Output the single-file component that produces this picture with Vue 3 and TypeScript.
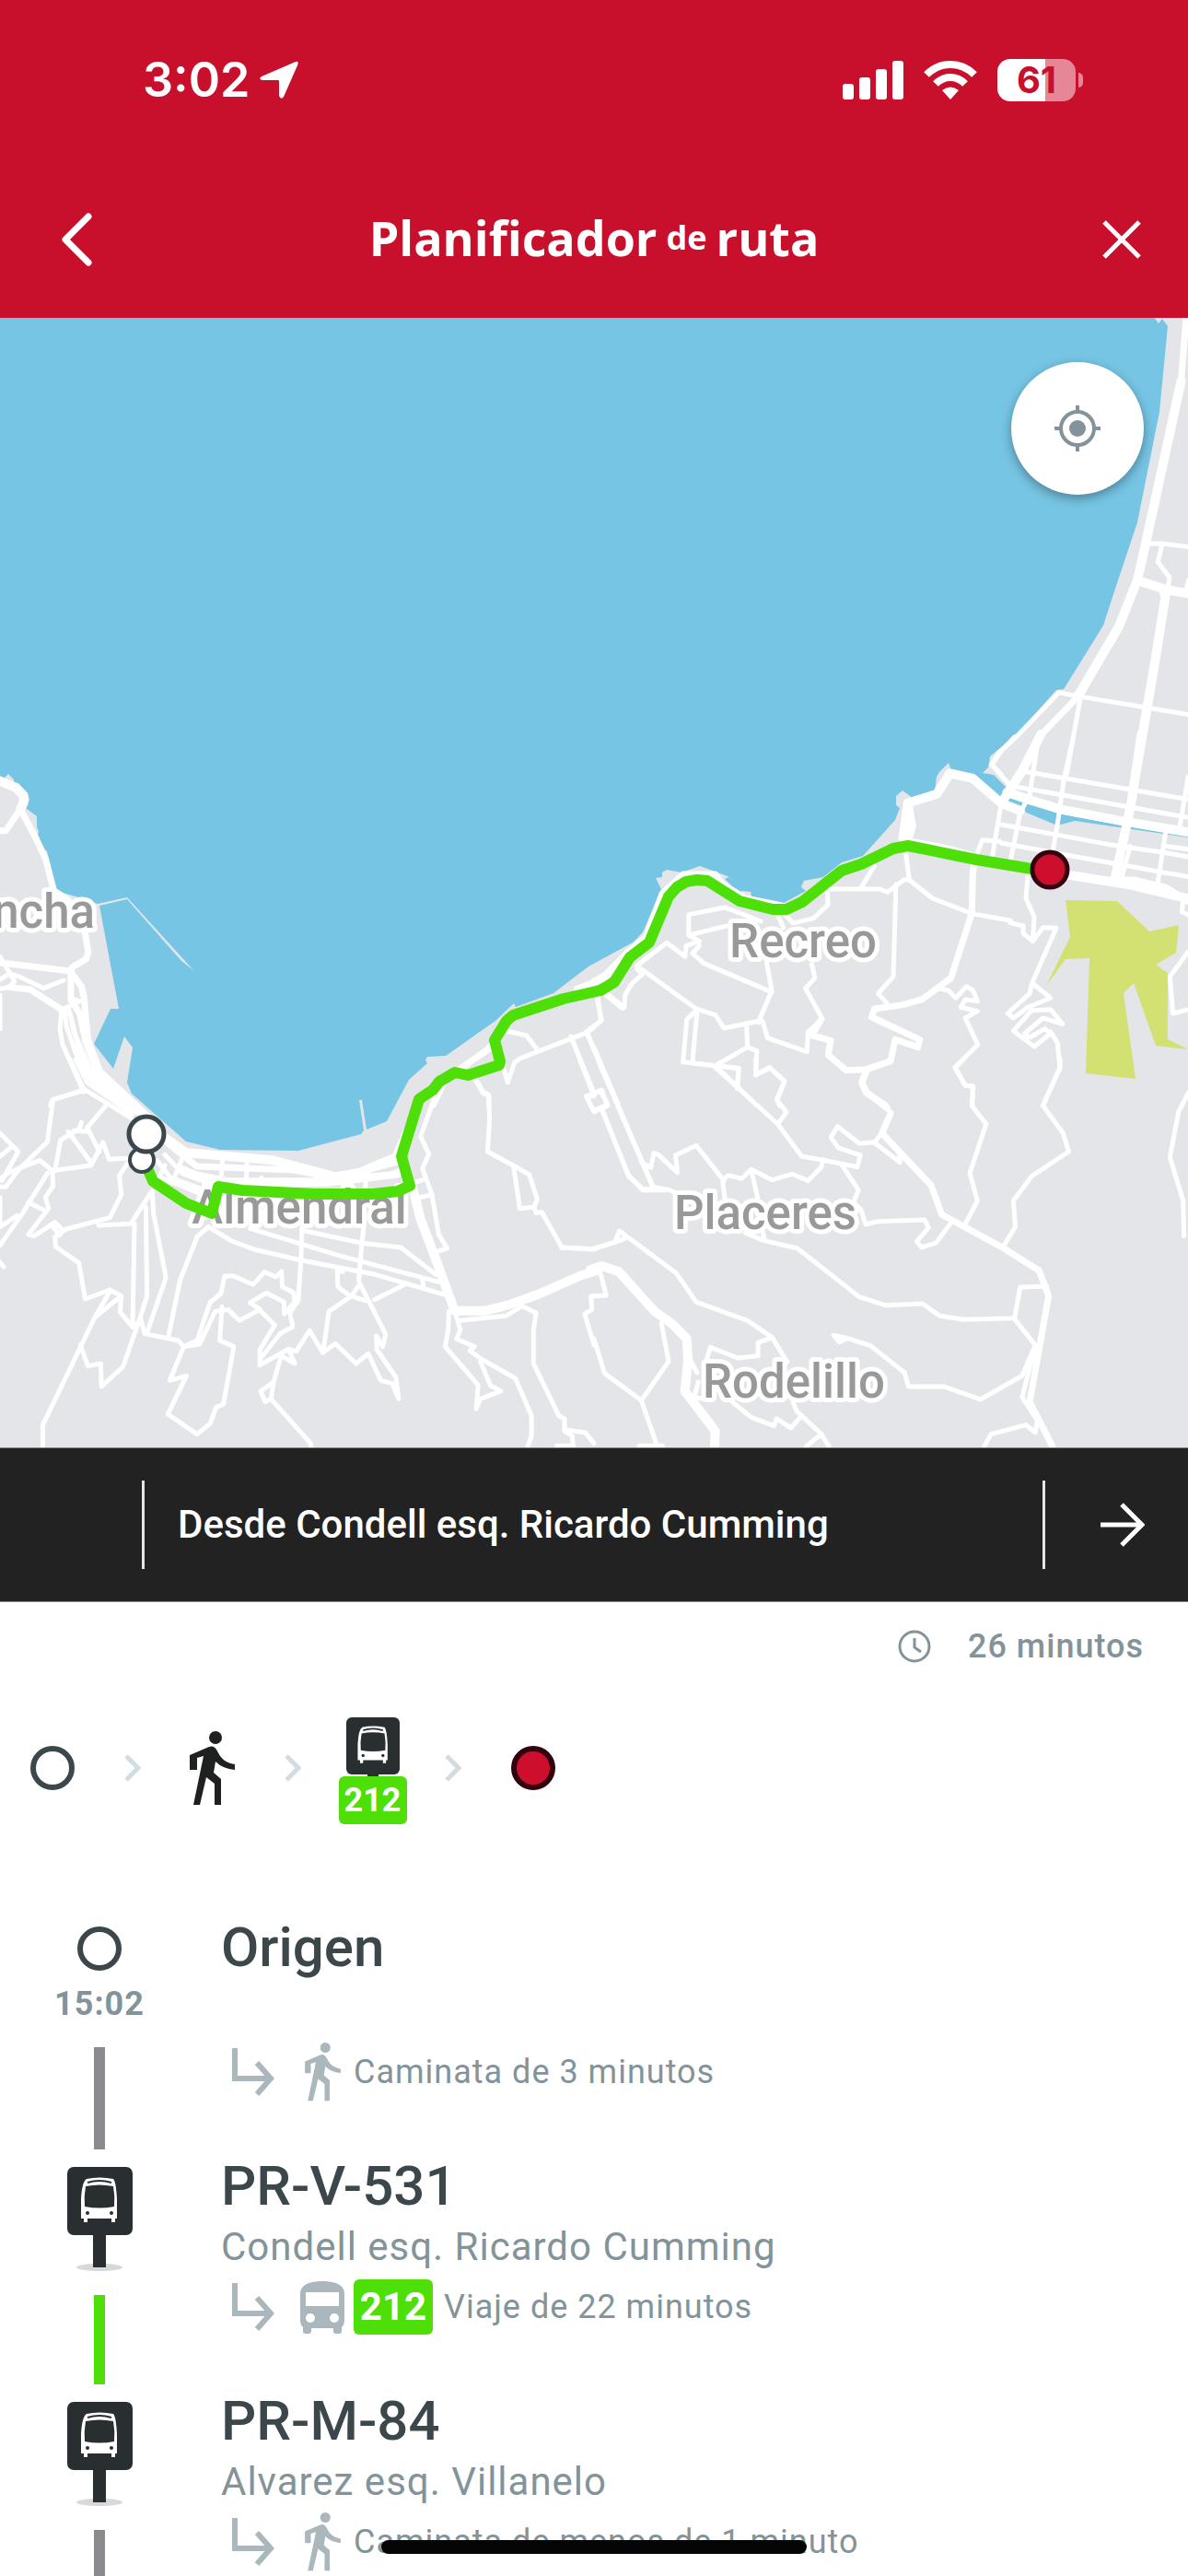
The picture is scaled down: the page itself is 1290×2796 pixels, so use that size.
<script setup lang="ts">
interface Tile {
  transform: string
  minor: string[]
  major: string[]
  wide: string[]
}

interface Leg {
  kind: 'walk' | 'bus'
  label: string
  line?: string
}

interface Step {
  title: string
  place?: string
  time?: string
  leg: Leg
}

const tiles: Tile[] = [
  {
    transform: 'translate(0 800) scale(0.4114 0.3333)',
    minor: [
      '0,715 38,795 25,815 0,820',
      '0,790 25,770 55,782 115,818 168,792',
      '163,888 158,950 165,1000 215,1140 222,1155',
      '163,888 210,860 185,850',
      '170,885 175,940 200,1030 230,1110',
      '180,880 195,960 245,1100 350,1200',
      '185,900 205,1000 230,1100 330,1200',
      '222,1150 138,1182 133,1200',
      '0,840 0,950',
      '1520,820 1568,800',
      '1340,958 1390,972 1418,1018',
      '1330,1080 1340,1125 1358,1060 1375,1045 1550,962 1568,945',
      '1550,962 1568,1020',
      '1508,980 1568,1160',
      '1290,1020 1180,1110 1145,1200',
      '1250,1105 1275,1160 1290,1165 1290,1200',
    ],
    major: [
      '54,235 15,305 0,305',
      '54,235 95,330 120,395 142,500 180,530',
      '225,640 233,700 228,722 190,750 187,762 0,735',
      '187,765 215,812 222,850 232,985',
      '187,765 187,855 210,900 225,985',
      '25,815 80,822 163,888',
      '1310,985 1285,1020 1215,1080',
    ],
    wide: ['-10,140 0,143 40,163 62,190 62,215 54,235', '228,985 260,1090 390,1240'],
  },
  {
    transform: 'translate(0 1150) scale(0.4114 0.3333)',
    minor: [
      '185,0 220,95 345,190',
      '200,0 230,75 350,178',
      '215,0 240,65 380,190',
      '220,100 140,130 125,268 50,358 15,415 0,415',
      '0,240 48,300 5,395',
      '30,285 0,315',
      '0,390 20,370 105,328 138,362 240,345 272,270 288,325 335,322',
      '280,150 230,222 262,300',
      '215,205 210,225 160,262 145,362',
      '180,235 240,335',
      '195,232 232,235',
      '138,362 140,412 120,448 128,485 75,570 90,575 145,530 165,555 157,572 138,542',
      '125,370 60,500 0,605',
      '75,465 118,492',
      '0,545 45,508',
      '0,450 0,540',
      '0,660 10,675',
      '335,340 315,378 320,440 290,515 175,552 145,578 147,610 208,662 225,780 290,750 320,770 317,822 350,872 372,850',
      '260,540 345,535 400,430',
      '355,535 350,870',
      '385,480 388,770 370,840 325,1000 268,1065 266,990 232,998 212,930',
      '402,430 405,500 438,710 388,890',
      '290,755 250,840 113,1190 113,1260',
      '315,775 250,840',
      '370,840 382,893 470,915 485,935 527,927',
      '550,545 520,578 475,720 445,900',
      '485,935 448,1045 492,1030 443,1155 520,1220 555,1185 570,1133 590,1122 617,935 580,915 586,805',
      '485,935 520,915 555,790 583,762 593,705 617,705 668,733 698,692 728,708 743,690 745,740 775,760 778,790 750,828 750,790 703,760 660,792 685,812',
      '527,927 568,820 603,815 632,850 685,815 725,865 686,945 686,995 762,943 778,990 742,965',
      '797,550 795,640 787,785 765,825 773,870 740,892 690,970',
      '742,965 722,1050 688,1080 700,1115 715,1105 820,1250 820,1260',
      '722,1050 715,1105',
      '765,945 782,950 817,882 852,955 885,925 940,990 972,958 1005,1045 1035,1055 1052,1105 1045,1035 995,945 993,900 1010,935 1018,895 950,730 928,770 868,820 853,950',
      '905,690 890,690 892,740 925,770 965,785',
      '988,782 1065,735',
      '960,545 955,600 947,720',
      '550,545 610,590 670,618 800,655 990,700 1170,765',
      '660,550 900,640 1160,725',
      '805,558 955,598 1058,612 1150,700',
      '1115,715 1118,745',
      '1215,850 1335,835 1378,803 1415,825 1408,880 1408,990 1475,1160 1490,1170 1490,1210 1510,1225 1513,1260',
      '1200,820 1215,880 1205,910 1252,935 1240,948 1270,975 1360,1038 1403,1160 1403,1225 1393,1260',
      '1185,820 1183,880 1175,935 1262,1060 1257,1137 1268,1105 1322,1080 1295,1062 1268,985',
      '1490,1205 1545,1215 1568,1250',
      '1470,1258 1510,1258',
      '1568,770 1560,770 1562,815 1543,828 1568,930',
      '1160,80 1110,250 1132,308 1115,355 1140,440 1158,570 1180,615 1155,625',
      '1090,455 1140,440',
      '1085,405 1120,390',
      '1255,60 1275,105 1290,115 1292,200 1287,300 1355,345 1397,375 1418,455 1410,480 1372,485 1355,345',
      '1410,480 1415,500 1430,497 1483,612 1568,617',
      '1530,0 1565,110',
      '1568,118 1548,122 1568,170',
      '435,310 480,370 545,400',
      '415,330 450,385 540,425',
      '425,385 535,440',
      '480,325 455,400',
      '587,330 583,395',
      '652,340 650,395',
      '435,345 420,385',
      '965,395 965,430',
      '690,385 690,420',
      '1107,130 1045,300',
    ],
    major: [
      '440,270 520,348 775,360 885,385 1045,335',
      '470,350 520,375 600,395 860,395 1030,375 1055,365',
      '540,400 700,408 870,402 1050,375',
    ],
    wide: [
      '430,250 490,303 720,328 885,382 950,368 1050,316',
      '1090,420 1110,520 1150,650 1200,818 1280,818 1340,800 1420,765 1530,705 1580,685',
    ],
  },
  {
    transform: 'translate(645 800) scale(0.4114 0.3333)',
    minor: [
      '1110,0 1075,45 1050,90 1100,160',
      '1170,20 1150,190 1125,245 1100,400',
      '1265,0 1240,140 1225,270 1212,365',
      '1568,130 1545,300',
      '1135,112 1420,172 1568,203',
      '1105,160 1400,225 1568,262',
      '1075,285 1360,350 1500,375 1568,390',
      '1075,345 1220,378 1400,418 1568,455',
      '1508,315 1488,475',
      '1505,355 1568,365',
      '1075,215 1052,385',
      '1070,340 1025,335 1005,400',
      '1415,355 1395,450',
      '1470,495 1490,475',
      '1555,530 1552,570 1568,578',
      '822,370 832,465 818,465 775,505 755,495 615,495 618,545 580,590 530,605',
      '740,420 705,490',
      '832,465 893,525 997,575 1100,598',
      '797,480 790,780 750,835 772,865',
      '1145,450 1140,525 1162,585 1158,665 1133,640 1133,615 1098,605',
      '1158,665 1185,620 1220,622 1155,805 1150,835 1092,900 1107,915 1145,880 1205,850 1160,805',
      '1145,975 1137,965 1185,915 1237,935 1205,887 1155,890 1107,957 1162,1008 1205,965 1190,950 1150,978',
      '1205,960 1223,995 1230,1075 1185,1200',
      '905,818 935,825 955,850 983,812 1000,825 1012,860 980,855 968,880 1012,893 980,915 1013,1002 953,1075 980,1135 1000,1137 998,1200',
      '1568,700 1520,780 1528,900 1568,888',
      '440,600 400,580 345,555 250,578 250,645 350,615',
      '250,645 278,665 243,680 240,715 192,670 113,745 270,885 320,905 343,948 435,925 468,830 290,737 260,705 278,680',
      '113,755 128,772 100,803 82,840 80,880',
      '10,845 18,925 0,943',
      '455,730 470,830',
      '575,740 583,785 558,818 603,918',
      '485,580 500,620',
      '505,580 525,605',
      '435,930 445,925 458,980 562,1025 565,960 597,925',
      '270,890 245,920 235,1058 320,1070 405,1010 403,945',
      '272,895 260,1055',
      '405,1010 430,1022 427,1100 465,1078 503,1120 483,1180 490,1200',
      '320,1070 382,1080 378,1140',
      '320,1070 430,1200',
      '0,1010 65,1200',
      '0,1160 18,1155 35,1195',
    ],
    major: [
      '1005,400 1000,440 997,575 942,785 865,855 815,872 740,885 733,912 860,985 855,1010 795,985 783,1055 720,1082 665,1085 618,1035 625,988 575,972 597,925',
      '720,1085 707,1125 718,1158 770,1200',
      '825,215 812,330',
      '0,795 30,775 90,700 138,650 180,510 235,447 320,447 340,480 400,525 500,550',
      '1010,390 930,362 840,340',
      '25,830 75,880',
      '1380,465 1425,465 1510,490 1568,535',
    ],
    wide: [
      '1180,-10 1130,110 1075,215',
      '1445,-10 1420,200 1400,320 1375,460',
      '1090,180 1150,205 1230,235 1400,275 1580,312',
      '828,330 838,290 828,215 905,185 940,118 1000,135 1075,215 1125,240',
      '1205,440 1410,480 1580,530',
    ],
  },
  {
    transform: 'translate(645 1150) scale(0.4114 0.3333)',
    minor: [
      '10,0 155,415 200,425 215,435',
      '20,160 90,375 128,425 190,425',
      '0,110 20,100 35,148 0,165',
      '320,25 485,210 548,315 605,328 695,350 703,312 645,288 625,253 643,218 700,273 738,270',
      '235,8 320,20 382,28 378,95',
      '427,0 427,50 463,25 503,72 483,132 508,172 485,210',
      '760,240 740,270 808,335 805,310',
      '975,0 953,28 980,85 1000,87 998,152 1035,210 992,370 1012,460 978,540',
      '1230,0 1230,28 1185,150 1238,240 1253,300 1155,380 1107,460 1112,545 1080,610',
      '1568,110 1543,170 1520,318 1555,460 1557,575',
      '125,335 150,352 158,305 170,310 220,368 215,312 270,280 343,395 340,400 345,450',
      '343,388 355,377 390,388 415,358 470,392 523,373 565,395 600,350 605,325',
      '415,360 432,450',
      '655,345 698,425 685,465 705,490 717,537 750,527 873,522 883,548 852,592 865,612 903,597 940,535',
      '400,565 450,590 537,615 700,773 768,800 867,795 913,835 975,847 1110,842 1125,742 1195,738',
      '445,560 450,585',
      '1110,845 1165,930 1130,1100 1170,1175 1165,1215 1140,1190 1048,1220 1030,1260',
      '1165,930 1130,1030 1020,1107 923,1065 830,1065 820,1020 730,932 670,908 648,920 632,898 670,908',
      '0,615 55,595 67,558 218,697 270,790 405,850 470,905 510,985',
      '55,595 85,580',
      '470,905 433,922 433,965 380,972 307,937 298,975',
      '18,700 32,768 0,770',
      '0,910 28,1022 125,1110 197,983 178,860',
      '125,1110 167,1260',
      '120,1258 180,1258',
      '255,980 272,1020',
      '265,1100 275,1050',
      '265,1100 290,1105',
      '365,1115 415,1165 475,1193 482,1170 520,1200 548,1160',
      '525,1115 535,1145 600,1220 620,1260',
      '600,1220 560,1260',
    ],
    major: [
      '720,32 707,73 718,105 775,160',
      '783,175 760,240 890,410 918,505 1075,610 1175,688 1200,770 1150,1115 1210,1260',
    ],
    wide: ['-10,685 20,672 65,690 160,820 210,865 245,910 248,980 240,1080 320,1210 318,1270'],
  },
  {
    transform: 'translate(900 340) scale(0.3333 0.3333)',
    minor: [
      '1040,750 1085,750 1180,762',
      '1085,755 1072,810 1110,860 1105,890',
      '1080,900 1095,940',
      '750,1235 810,1247 1180,1308',
      '750,1235 610,1380 555,1430 530,1470 560,1500',
      '820,1250 775,1500',
      '680,1400 665,1500',
      '1172,870 1163,910',
    ],
    major: ['1165,0 1148,220 1030,740', '810,1250 690,1375 620,1500'],
    wide: ['1148,220 1030,760 1005,870 945,1020 810,1250', '1005,870 1100,900 1180,914', '1100,900 1060,1150 1000,1500'],
  },
  {
    transform: 'translate(380 900) scale(0.3333 0.3333)',
    minor: [
      '720,675 795,860',
      '770,870 820,850 840,900 795,920 770,870',
      '820,910 908,1130 955,1172 990,1172',
      '770,660 990,1170',
      '770,660 820,622 805,550',
      '690,1362 795,1368 890,1335',
    ],
    major: ['740,520 830,485 905,400'],
    wide: [],
  },
]

const coast =
  '0,842 3,846 9,840 15,846 15,850 20,850 30,861 32,868 28,877 40,886 40,898 42,902 41,907 46,920 51,924 61,967 82,973 106,981 138,974 210,1053 197,1043 138,976 108,983 129,1095 120,1095 102,1133 123,1160 135,1125 144,1137 138,1175 143,1187 202,1239 239,1248 324,1249 392,1231 395,1227 390,1194 393,1194 398,1226 420,1217 444,1172 464,1154 462,1151 464,1147 484,1146 538,1108 558,1089 560,1093 601,1078 639,1049 687,1023 698,1012 718,965 712,953 719,952 719,947 724,944 740,947 760,940 790,951 801,958 791,952 787,954 805,972 805,967 815,968 816,973 851,980 875,967 870,963 873,956 894,952 914,936 937,929 972,890 977,877 973,874 973,864 980,858 991,866 1015,859 1017,843 1020,838 1030,828 1033,837 1061,842 1087,867 1093,855 1079,841 1067,839 1073,833 1075,821 1104,797 1147,749 1155,748 1198,679 1208,648 1235,567 1259,447 1268,354 1262,346 1258,351 1253,344 1290,344 1290,1572 0,1572'

const river =
  '1056,842 1068,843 1079,841 1095,861 1108,865 1112,870 1149,883 1198,892 1290,906 1290,909 1167,891 1148,896 1110,880 1091,872'

const park =
  '1157,977 1213,978 1248,1011 1280,1004 1277,1034 1255,1047 1268,1056 1268,1128 1290,1139 1255,1135 1231,1067 1220,1078 1233,1171 1179,1165 1183,1040 1157,1041 1136,1070 1162,1017'

const route =
  '160,1268 166,1282 202,1306 230,1317 237,1288 263,1292 341,1296 405,1296 432,1293 445,1287 436,1255 455,1193 470,1183 477,1174 494,1164 508,1167 542,1156 543,1152 537,1129 550,1108 557,1102 612,1084 652,1075 667,1066 684,1039 705,1023 726,973 735,963 745,957 757,955 768,956 803,978 839,987 854,987 871,979 914,945 935,938 970,921 986,918 1060,933 1120,943'

const labels = [
  { text: 'ncha', x: 103, y: 1007, anchor: 'end' },
  { text: 'Recreo', x: 872, y: 1039, anchor: 'middle' },
  { text: 'Almendral', x: 325, y: 1328, anchor: 'middle' },
  { text: 'Placeres', x: 831, y: 1334, anchor: 'middle' },
  { text: 'Rodelillo', x: 862, y: 1517, anchor: 'middle' },
] as const

const steps: Step[] = [
  { title: 'Origen', time: '15:02', leg: { kind: 'walk', label: 'Caminata de 3 minutos' } },
  {
    title: 'PR-V-531',
    place: 'Condell esq. Ricardo Cumming',
    leg: { kind: 'bus', line: '212', label: 'Viaje de 22 minutos' },
  },
  {
    title: 'PR-M-84',
    place: 'Alvarez esq. Villanelo',
    leg: { kind: 'walk', label: 'Caminata de menos de 1 minuto' },
  },
]

const walker =
  'M0 26L21 17Q26 15 29 20L33 27Q39 35 49 36V42Q36 41 28 33L26 45L34 52V80H27V57L18 50L11 80H4L15 27L8 29V42H0Z'
const busFace =
  'M21 13Q35 10 50 13Q53 16 54 35V56H52V60H48V56H22V60H18V56H15V35Q16 16 21 13Z'
</script>

<template>
  <div class="screen">
    <header class="top">
      <div class="status">
        <div class="clock">
          <span>3:02</span>
          <svg width="42" height="42" viewBox="0 0 42 42" aria-hidden="true">
            <path d="M39 1Q43 0 41 5L26 39Q23 43 21 38V22Q21 21 20 21H3Q-2 20 2 17Z" fill="#fff" />
          </svg>
        </div>
        <div class="signals">
          <svg width="66" height="42" viewBox="0 0 66 42" fill="#fff" aria-hidden="true">
            <rect x="0" y="25" width="12" height="17" rx="3" />
            <rect x="18" y="18" width="12" height="24" rx="3" />
            <rect x="36" y="9" width="12" height="33" rx="3" />
            <rect x="54" y="0" width="12" height="42" rx="3" />
          </svg>
          <svg width="58" height="42" viewBox="0 0 58 42" aria-hidden="true">
            <g fill="none" stroke="#fff" stroke-width="8">
              <path d="M3 15Q14 4 29 4T55 15" />
              <path d="M13 25Q20 18 29 18T45 25" />
            </g>
            <path d="M20 32Q29 25 38 32L29 42Z" fill="#fff" />
          </svg>
          <div class="battery">
            <div class="cell"><span>61</span></div>
            <i class="nub"></i>
          </div>
        </div>
      </div>
      <nav class="bar">
        <button class="nav-btn back" type="button" aria-label="Volver">
          <svg width="34" height="58" viewBox="0 0 34 58" aria-hidden="true">
            <path d="M30 4L5 29L30 54" fill="none" stroke="#fff" stroke-width="7" stroke-linecap="round" stroke-linejoin="round" />
          </svg>
        </button>
        <h1><span>Planificador</span> <small>de</small> <span>ruta</span></h1>
        <button class="nav-btn" type="button" aria-label="Cerrar">
          <svg width="42" height="42" viewBox="0 0 42 42" aria-hidden="true">
            <path d="M2 2L40 40M40 2L2 40" fill="none" stroke="#fff" stroke-width="5" />
          </svg>
        </button>
      </nav>
    </header>

    <section class="map">
      <svg class="map-art" viewBox="0 345 1290 1226" role="img" aria-label="Mapa de la ruta">
        <rect x="0" y="344" width="1290" height="1228" fill="#76c5e4" />
        <polygon :points="coast" fill="#e4e5e9" />
        <polygon :points="river" fill="#76c5e4" />
        <polygon :points="park" fill="#d3e173" />
        <g v-for="tile in tiles" :key="tile.transform" :transform="tile.transform" class="roads">
          <polyline v-for="p in tile.minor" :key="p" :points="p" class="minor" />
          <polyline v-for="p in tile.major" :key="p" :points="p" class="major" />
          <polyline v-for="p in tile.wide" :key="p" :points="p" class="wide" />
        </g>
        <text
          v-for="l in labels"
          :key="l.text"
          class="place-label"
          :x="l.x"
          :y="l.y"
          :text-anchor="l.anchor"
        >{{ l.text }}</text>
        <polyline :points="route" class="route" />
        <circle cx="154" cy="1259" r="13" fill="#fff" stroke="#3c474c" stroke-width="4" />
        <circle cx="159" cy="1231" r="19" fill="#fff" stroke="#3c474c" stroke-width="5" />
        <circle cx="1140" cy="944" r="19" fill="#cd0f2d" stroke="#32000e" stroke-width="5" />
      </svg>
      <button class="locate" type="button" aria-label="Mi ubicación">
        <svg width="50" height="50" viewBox="0 0 50 50" aria-hidden="true">
          <circle cx="25" cy="25" r="18" fill="none" stroke="#829399" stroke-width="4" />
          <circle cx="25" cy="25" r="9" fill="#829399" />
          <path d="M25 0V6M25 44V50M0 25H6M44 25H50" stroke="#829399" stroke-width="4" />
        </svg>
      </button>
    </section>

    <section class="direction">
      <div class="prev"></div>
      <p>Desde Condell esq. Ricardo Cumming</p>
      <button class="next" type="button" aria-label="Siguiente">
        <svg width="48" height="48" viewBox="0 0 48 48" aria-hidden="true">
          <path d="M0 24H44M23 2L45 24L23 46" fill="none" stroke="#fff" stroke-width="5" />
        </svg>
      </button>
    </section>

    <main>
      <p class="duration">
        <svg width="36" height="36" viewBox="0 0 36 36" fill="none" stroke="#829399" stroke-width="3" aria-hidden="true">
          <circle cx="18" cy="18" r="16" />
          <path d="M18 9V19L25 24" />
        </svg>
        <span>26 minutos</span>
      </p>

      <div class="summary">
        <span class="cell-item"><i class="ring"></i></span>
        <span class="cell-item">
          <svg class="chevron" width="18" height="30" viewBox="0 0 18 30"><path d="M2 2L15 15L2 28" /></svg>
        </span>
        <span class="cell-item">
          <svg width="49" height="81" viewBox="0 0 49 81" fill="#1f2121"><circle cx="28" cy="7" r="7" /><path :d="walker" /></svg>
        </span>
        <span class="cell-item">
          <svg class="chevron" width="18" height="30" viewBox="0 0 18 30"><path d="M2 2L15 15L2 28" /></svg>
        </span>
        <span class="cell-item stop">
          <svg width="60" height="64" viewBox="0 0 60 64" aria-hidden="true">
            <rect x="1" y="0" width="58" height="62" rx="6" fill="#292e31" />
            <rect x="24" y="60" width="12" height="4" fill="#292e31" />
            <g transform="translate(1 0) scale(0.83 0.83)">
              <path :d="busFace" fill="#fff" />
              <path d="M20 21Q35 18 50 21Q52 32 51 43Q35 46 19 43Q18 32 20 21Z" fill="#292e31" />
              <path d="M22 17Q35 13 48 17" fill="none" stroke="#292e31" stroke-width="2" />
              <circle cx="22" cy="50" r="2" fill="#292e31" />
              <circle cx="48" cy="50" r="2" fill="#292e31" />
            </g>
          </svg>
          <b class="badge small">212</b>
        </span>
        <span class="cell-item">
          <svg class="chevron" width="18" height="30" viewBox="0 0 18 30"><path d="M2 2L15 15L2 28" /></svg>
        </span>
        <span class="cell-item"><i class="ring end"></i></span>
      </div>

      <ol class="steps">
        <li v-for="step in steps" :key="step.title" class="step">
          <div class="rail">
            <template v-if="step.time">
              <i class="ring"></i>
              <time>{{ step.time }}</time>
            </template>
            <svg v-else class="sign" width="71" height="113" viewBox="0 0 71 113" aria-hidden="true">
              <ellipse cx="35" cy="109" rx="25" ry="4" fill="#d9d8d9" />
              <rect width="71" height="74" rx="7" fill="#292e31" />
              <rect x="28" y="72" width="14" height="37" fill="#292e31" />
              <path :d="busFace" fill="#fff" />
              <path d="M20 21Q35 18 50 21Q52 32 51 43Q35 46 19 43Q18 32 20 21Z" fill="#292e31" />
              <path d="M22 17Q35 13 48 17" fill="none" stroke="#292e31" stroke-width="2" />
              <circle cx="22" cy="50" r="2" fill="#292e31" />
              <circle cx="48" cy="50" r="2" fill="#292e31" />
            </svg>
            <span class="line" :class="step.leg.kind"></span>
          </div>
          <div class="body">
            <h2>{{ step.title }}</h2>
            <p v-if="step.place" class="place">{{ step.place }}</p>
            <div v-else class="spacer"></div>
            <div class="leg">
              <svg class="turn" width="46" height="52" viewBox="0 0 46 52" aria-hidden="true">
                <path d="M3 0V33H42M27 16L42 33L27 50" fill="none" stroke="#aab7bd" stroke-width="6" />
              </svg>
              <span class="mode">
                <svg v-if="step.leg.kind === 'walk'" width="39" height="64" viewBox="0 0 49 81" fill="#aab7bd" aria-hidden="true">
                  <circle cx="28" cy="7" r="7" />
                  <path :d="walker" />
                </svg>
                <svg v-else width="48" height="57" viewBox="0 0 48 57" aria-hidden="true">
                  <path d="M0 14Q0 0 24 0T48 14V42Q48 47 45 50V54Q45 57 42 57H39Q36 57 36 54V51H12V54Q12 57 9 57H6Q3 57 3 54V50Q0 47 0 42Z" fill="#aab7bd" />
                  <rect x="6" y="12" width="36" height="15" fill="#fff" />
                  <circle cx="11" cy="40" r="5" fill="#fff" />
                  <circle cx="37" cy="40" r="5" fill="#fff" />
                </svg>
              </span>
              <b v-if="step.leg.line" class="badge">{{ step.leg.line }}</b>
              <span>{{ step.leg.label }}</span>
            </div>
          </div>
        </li>
      </ol>
    </main>
    <div class="home"></div>
  </div>
</template>

<style>
body {
  margin: 0;
  background: #fff;
}
</style>

<style scoped>
.screen {
  position: relative;
  height: 100vh;
  overflow: hidden;
  display: flex;
  flex-direction: column;
  font-family: Roboto, sans-serif;
  color: #829399;
}
h1,
h2,
p,
ol {
  margin: 0;
  padding: 0;
  font-weight: 400;
}
button {
  border: 0;
  padding: 0;
  background: none;
  display: flex;
  align-items: center;
  justify-content: center;
}
svg {
  display: block;
  flex: none;
}
.top {
  flex: none;
  background: #c8102c;
  color: #fff;
}
.status {
  height: 174px;
  box-sizing: border-box;
  padding: 0 114px 0 155px;
  display: flex;
  align-items: center;
  justify-content: space-between;
}
.clock {
  display: flex;
  align-items: center;
  gap: 11px;
  font: 600 52px/60px Inter, sans-serif;
}
.signals {
  display: flex;
  align-items: center;
  gap: 22px;
}
.battery {
  display: flex;
  align-items: center;
  gap: 3px;
}
.cell {
  width: 85px;
  height: 46px;
  border-radius: 14px;
  background: linear-gradient(90deg, #fff 61%, #e58796 61%);
  color: #c8102c;
  text-align: center;
  font: 700 40px/46px Inter, sans-serif;
}
.nub {
  width: 5px;
  height: 16px;
  border-radius: 0 6px 6px 0;
  background: #e58796;
}
.bar {
  height: 171px;
  box-sizing: border-box;
  padding: 0 18px;
  display: flex;
  align-items: center;
  justify-content: space-between;
}
.nav-btn {
  box-sizing: border-box;
  width: 108px;
  height: 108px;
}
.back {
  padding-left: 22px;
}
h1 {
  display: flex;
  align-items: baseline;
  gap: 10px;
  font: 700 52px/72px "Open Sans", "Noto Sans", sans-serif;
}
h1 small {
  font-size: 36px;
  padding-bottom: 4px;
  align-self: center;
}
.map {
  position: relative;
  flex: none;
}
.map-art {
  width: 100%;
  height: auto;
}
.roads polyline {
  fill: none;
  stroke: #fff;
  stroke-linejoin: round;
  stroke-linecap: round;
  vector-effect: non-scaling-stroke;
}
.roads .minor {
  stroke-width: 5px;
}
.roads .major {
  stroke-width: 7px;
}
.roads .wide {
  stroke-width: 10px;
}
.route {
  fill: none;
  stroke: #4ddf07;
  stroke-width: 12px;
  stroke-linejoin: round;
}
.place-label {
  font: 500 51px Roboto, sans-serif;
  fill: #999;
  stroke: #fff;
  stroke-width: 10px;
  stroke-linejoin: round;
  paint-order: stroke;
}
.locate {
  position: absolute;
  top: 48px;
  right: 48px;
  width: 144px;
  height: 144px;
  border-radius: 50%;
  background: #fff;
  box-shadow: 0 4px 12px rgba(0, 0, 0, 0.35);
}
.direction {
  flex: none;
  height: 168px;
  box-sizing: border-box;
  border-top: 1px solid #7c8284;
  border-bottom: 1px solid #8a8a8a;
  background: #222;
  color: #fff;
  display: flex;
  align-items: center;
}
.prev {
  width: 154px;
}
.direction p {
  flex: 1;
  padding-left: 36px;
  border: solid #e6e6e6;
  border-width: 0 3px;
  font-weight: 500;
  font-size: 42px;
  line-height: 96px;
}
.next {
  box-sizing: border-box;
  width: 155px;
  height: 96px;
  padding-left: 12px;
}
main {
  flex: 1;
  min-height: 0;
}
.duration {
  display: flex;
  align-items: center;
  justify-content: flex-end;
  gap: 40px;
  padding: 24px 48px 0 0;
  font-weight: 500;
  font-size: 36px;
  line-height: 48px;
  letter-spacing: 1px;
}
.summary {
  display: flex;
  align-items: center;
  height: 116px;
  margin: 50px 0 101px;
  padding-left: 13px;
}
.cell-item {
  width: 87px;
  display: flex;
  flex-direction: column;
  align-items: center;
}
.stop {
  padding-top: 5px;
}
.chevron path {
  fill: none;
  stroke: #d3dce1;
  stroke-width: 5px;
}
.ring {
  display: block;
  flex: none;
  box-sizing: border-box;
  width: 48px;
  height: 48px;
  border: 6px solid #3c474c;
  border-radius: 50%;
}
.ring.end {
  border-color: #32000e;
  background: #cd0f2d;
}
.badge {
  width: 86px;
  border-radius: 6px;
  background: #4ddf07;
  color: #fff;
  text-align: center;
  font-weight: 700;
  font-size: 42px;
  line-height: 60px;
  margin-right: 12px;
}
.badge.small {
  width: 74px;
  margin: 0;
  font-size: 36px;
  line-height: 52px;
}
.steps {
  list-style: none;
}
.step {
  display: grid;
  grid-template-columns: 216px 1fr;
}
.rail {
  display: flex;
  flex-direction: column;
  align-items: center;
}
.rail .ring {
  margin-top: 13px;
}
time {
  margin-top: 15px;
  font-weight: 700;
  font-size: 36px;
  line-height: 42px;
  letter-spacing: 1px;
}
.sign {
  margin-top: 15px;
}
.line {
  width: 12px;
  flex: 1;
  margin: 26px 0 4px;
}
.line.walk {
  background: #8b8a8f;
}
.line.bus {
  background: #4ddf07;
}
.body {
  padding: 0 24px 58px;
}
h2 {
  color: #3c474c;
  font-weight: 500;
  font-size: 60px;
  line-height: 72px;
}
.place {
  font-size: 42px;
  line-height: 60px;
  letter-spacing: 1px;
}
.spacer {
  height: 64px;
}
.leg {
  display: flex;
  align-items: center;
  height: 60px;
  margin-top: 5px;
  padding-left: 12px;
  font-size: 36px;
  letter-spacing: 1px;
}
.leg .badge {
  letter-spacing: 0;
}
.turn {
  margin-right: 18px;
}
.mode {
  width: 68px;
  display: flex;
  justify-content: center;
}
.home {
  position: absolute;
  left: 50%;
  bottom: 24px;
  width: 462px;
  height: 15px;
  margin-left: -231px;
  border-radius: 8px;
  background: #050505;
}
</style>
